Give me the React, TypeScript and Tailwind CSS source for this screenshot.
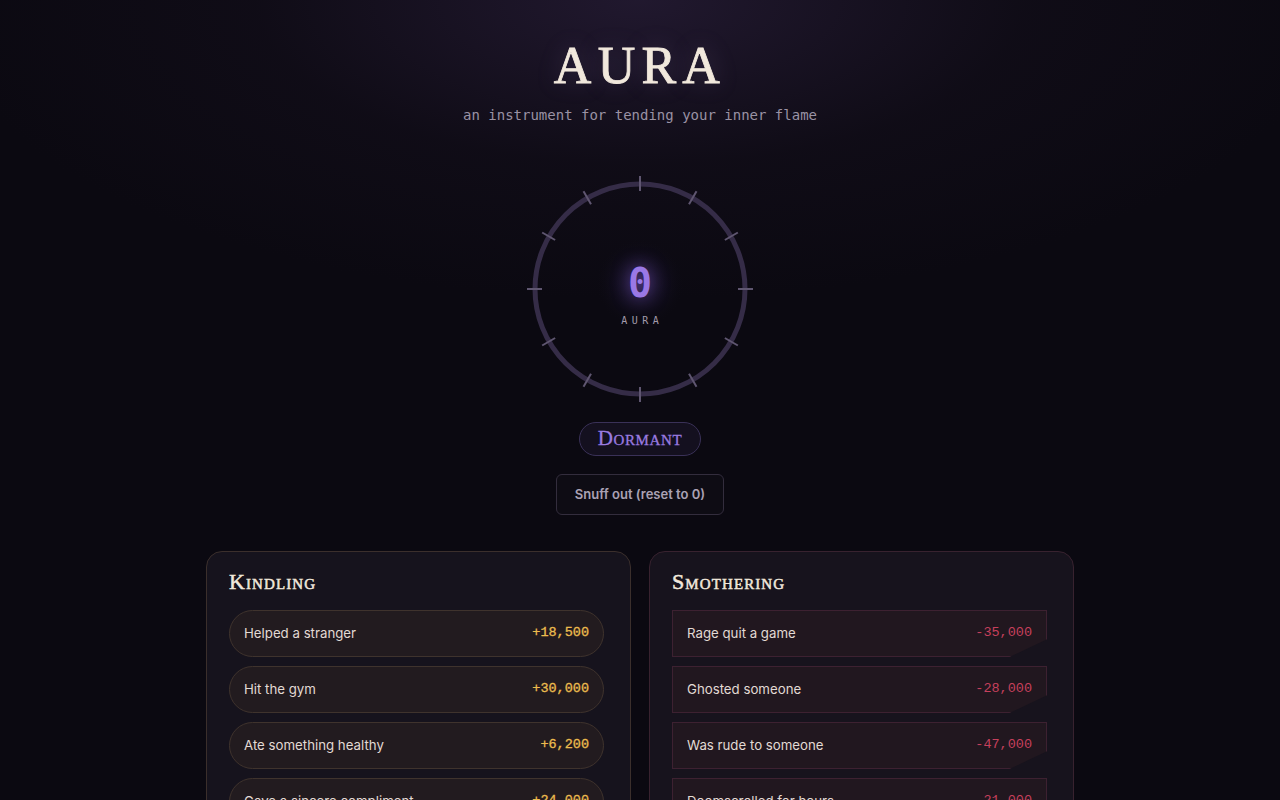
import React from "react";

const kindling = [
  { label: "Helped a stranger", value: "+18,500" },
  { label: "Hit the gym", value: "+30,000" },
  { label: "Ate something healthy", value: "+6,200" },
  { label: "Gave a sincere compliment", value: "+24,000" },
];

const smothering = [
  { label: "Rage quit a game", value: "-35,000" },
  { label: "Ghosted someone", value: "-28,000" },
  { label: "Was rude to someone", value: "-47,000" },
  { label: "Doomscrolled for hours", value: "-21,000" },
];

const serif = { fontFamily: '"Liberation Serif", "DejaVu Serif", serif' };
const mono = { fontFamily: '"Liberation Mono", "DejaVu Sans Mono", monospace' };
const dmono = { fontFamily: '"DejaVu Sans Mono", "Liberation Mono", monospace' };

function Dial() {
  const cx = 115;
  const cy = 115;
  const ticks = Array.from({ length: 12 }, (_, i) => i * 30);
  return (
    <div className="relative w-[230px] h-[230px]">
      <svg width="230" height="230" viewBox="0 0 230 230" className="absolute inset-0">
        <defs>
          <radialGradient id="glow" cx="50%" cy="50%" r="50%">
            <stop offset="0%" stopColor="#261c40" stopOpacity="0.9" />
            <stop offset="60%" stopColor="#18122a" stopOpacity="0.4" />
            <stop offset="100%" stopColor="#0d0b14" stopOpacity="0" />
          </radialGradient>
        </defs>
        <circle cx={cx} cy={cy - 6} r="44" fill="url(#glow)" />
        <circle cx={cx} cy={cy} r="105" fill="none" stroke="#352c47" strokeWidth="5" />
        {ticks.map((a) => {
          const rad = (a * Math.PI) / 180;
          const r1 = 98;
          const r2 = 113;
          return (
            <line
              key={a}
              x1={cx + r1 * Math.sin(rad)}
              y1={cy - r1 * Math.cos(rad)}
              x2={cx + r2 * Math.sin(rad)}
              y2={cy - r2 * Math.cos(rad)}
              stroke="#5f5670"
              strokeWidth="2"
            />
          );
        })}
      </svg>
      <div className="absolute inset-0 flex flex-col items-center justify-center pt-[13px]">
        <div
          className="text-[40px] leading-none font-bold text-[#9a78e6]"
          style={{ ...dmono, textShadow: "0 0 18px rgba(140,100,230,0.6)" }}
        >
          0
        </div>
        <div className="mt-[10px] text-[10px] leading-[15px] tracking-[0.45em] pl-[0.45em] text-[#a39bab]" style={dmono}>
          AURA
        </div>
      </div>
    </div>
  );
}

export default function App() {
  return (
    <div
      className="min-h-[800px] w-full bg-[#0b0911] flex flex-col items-center overflow-hidden"
      style={{
        fontFamily: 'Inter, "Noto Sans", sans-serif',
        backgroundImage:
          "radial-gradient(ellipse 700px 300px at 50% 0%, rgba(34,25,48,0.95), rgba(20,15,28,0.5) 55%, rgba(11,9,17,0) 100%)",
      }}
    >
      <h1
        className="mt-[40px] text-[52px] leading-none tracking-[0.12em] text-[#f1e8dc] [-webkit-text-stroke:0.8px_#f1e8dc]"
        style={{ ...serif, textShadow: "0 0 24px rgba(180,150,220,0.25)" }}
      >
        AURA
      </h1>
      <p className="mt-[14px] text-[14px] leading-[18px] text-[#9a92a4]" style={dmono}>
        an instrument for tending your inner flame
      </p>

      <div className="mt-[50px]">
        <Dial />
      </div>

      <div
        className="mt-[18px] h-[34px] px-[18px] rounded-full border border-[#3a3158] bg-[#14101f] flex items-center text-[#9a7be0] text-[21px] tracking-[0.03em] [-webkit-text-stroke:0.3px_#9a7be0]"
        style={{ ...serif, fontVariant: "small-caps" }}
      >
        Dormant
      </div>

      <button className="mt-[18px] h-[41px] px-[18px] rounded-[6px] border border-[#332d3d] bg-[#0e0c14] text-[13px] font-semibold text-[#aaa2b4]">
        Snuff out (reset to 0)
      </button>

      <div className="mt-[36px] flex gap-[18px]">
        <div className="w-[425px] h-[300px] rounded-[16px] border border-[#3b2f2c] bg-[#16131d] pl-[22px] pr-[26px] pt-[13px]">
          <h2
            className="text-[22px] text-[#f1e8dc] tracking-[0.05em] [-webkit-text-stroke:0.5px_#f1e8dc]"
            style={{ ...serif, fontVariant: "small-caps" }}
          >
            Kindling
          </h2>
          <div className="mt-[12px] flex flex-col gap-[9px]">
            {kindling.map((k) => (
              <div
                key={k.label}
                className="h-[47px] rounded-full border border-[#3f332d] bg-[#221b1f] flex items-center justify-between pl-[14px] pr-[14px]"
              >
                <span className="text-[13.25px] text-[#e2dad4]">{k.label}</span>
                <span className="text-[13.5px] text-[#ecbb4e] [-webkit-text-stroke:0.3px_#ecbb4e]" style={mono}>
                  {k.value}
                </span>
              </div>
            ))}
          </div>
        </div>

        <div className="w-[425px] h-[300px] rounded-[16px] border border-[#38222f] bg-[#17131d] pl-[22px] pr-[26px] pt-[13px]">
          <h2
            className="text-[22px] text-[#f1e8dc] tracking-[0.05em] [-webkit-text-stroke:0.5px_#f1e8dc]"
            style={{ ...serif, fontVariant: "small-caps" }}
          >
            Smothering
          </h2>
          <div className="mt-[12px] flex flex-col gap-[9px]">
            {smothering.map((k) => (
              <div
                key={k.label}
                className="h-[47px] border border-[#3d2131] bg-[#21171f] flex items-center justify-between pl-[14px] pr-[14px] [clip-path:polygon(0_0,100%_0,100%_62%,90%_100%,0_100%)]"
              >
                <span className="text-[13.25px] text-[#e2dad4]">{k.label}</span>
                <span className="text-[13.5px] text-[#c6405c]" style={mono}>
                  {k.value}
                </span>
              </div>
            ))}
          </div>
        </div>
      </div>
    </div>
  );
}
